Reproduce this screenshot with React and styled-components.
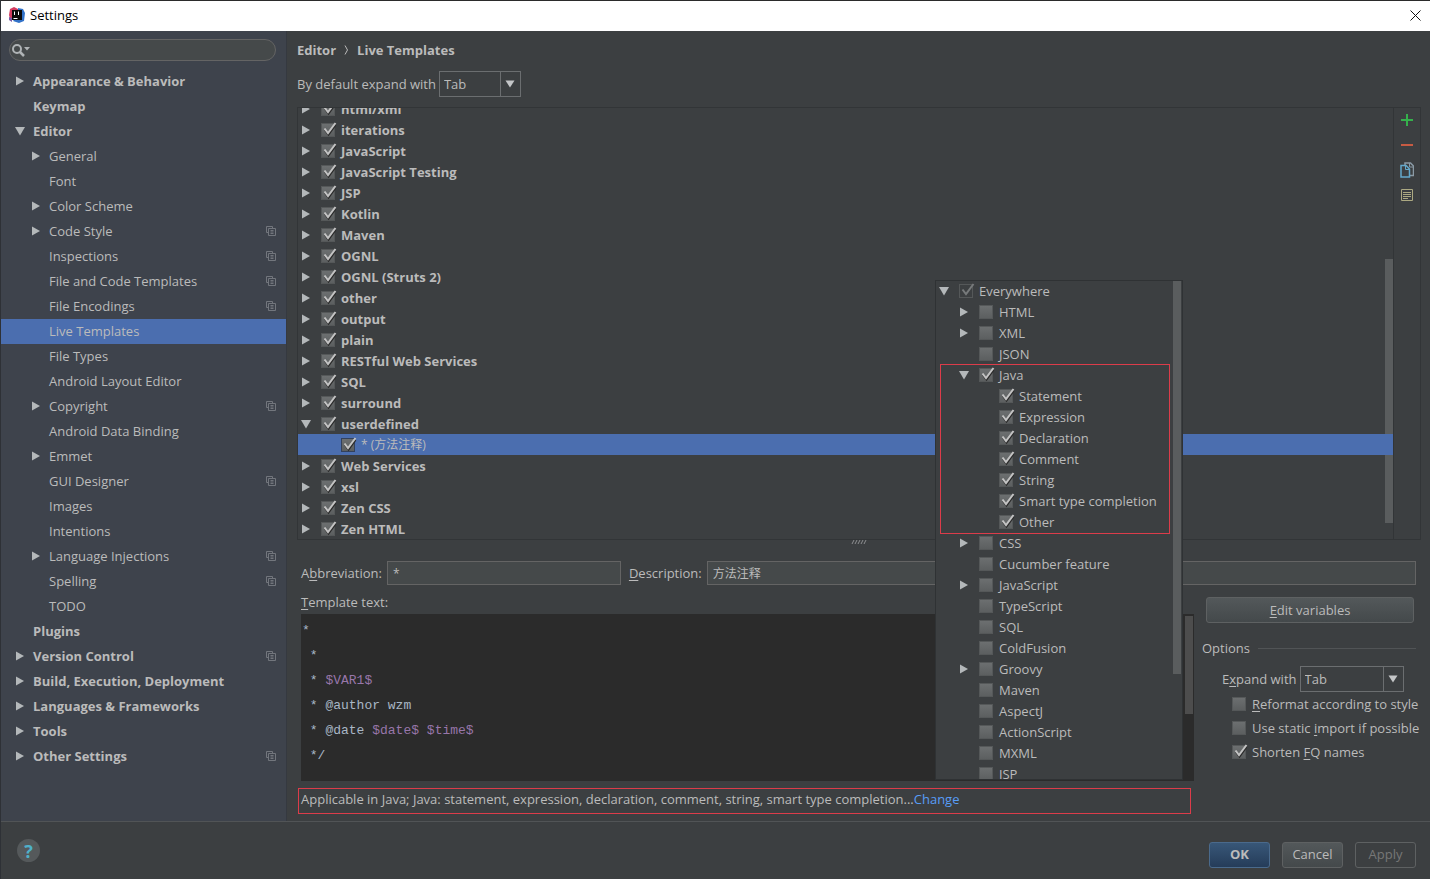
import React from 'react';
import styled, { createGlobalStyle, css } from 'styled-components';

const sidebarItems = [
  { label: 'Appearance & Behavior', arrow: 'right', top: true },
  { label: 'Keymap', top: true },
  { label: 'Editor', arrow: 'down', top: true },
  { label: 'General', arrow: 'right' },
  { label: 'Font' },
  { label: 'Color Scheme', arrow: 'right' },
  { label: 'Code Style', arrow: 'right', project: true },
  { label: 'Inspections', project: true },
  { label: 'File and Code Templates', project: true },
  { label: 'File Encodings', project: true },
  { label: 'Live Templates', selected: true },
  { label: 'File Types' },
  { label: 'Android Layout Editor' },
  { label: 'Copyright', arrow: 'right', project: true },
  { label: 'Android Data Binding' },
  { label: 'Emmet', arrow: 'right' },
  { label: 'GUI Designer', project: true },
  { label: 'Images' },
  { label: 'Intentions' },
  { label: 'Language Injections', arrow: 'right', project: true },
  { label: 'Spelling', project: true },
  { label: 'TODO' },
  { label: 'Plugins', top: true },
  { label: 'Version Control', arrow: 'right', top: true, project: true },
  { label: 'Build, Execution, Deployment', arrow: 'right', top: true },
  { label: 'Languages & Frameworks', arrow: 'right', top: true },
  { label: 'Tools', arrow: 'right', top: true },
  { label: 'Other Settings', arrow: 'right', top: true, project: true },
];

const group = (label) => ({ label, arrow: 'right', checked: true, bold: true });

const templates = [
  ...[
    'html/xml',
    'iterations',
    'JavaScript',
    'JavaScript Testing',
    'JSP',
    'Kotlin',
    'Maven',
    'OGNL',
    'OGNL (Struts 2)',
    'other',
    'output',
    'plain',
    'RESTful Web Services',
    'SQL',
    'surround',
  ].map(group),
  { label: 'userdefined', arrow: 'down', checked: true, bold: true },
  { label: '* (方法注释)', level: 1, checked: true, selected: true },
  ...['Web Services', 'xsl', 'Zen CSS', 'Zen HTML'].map(group),
];

const contextsBefore = [
  { label: 'Everywhere', arrow: 'down', checked: true, muted: true },
  { label: 'HTML', arrow: 'right', level: 1 },
  { label: 'XML', arrow: 'right', level: 1 },
  { label: 'JSON', level: 1 },
];

const contextsJava = [
  { label: 'Java', arrow: 'down', level: 1, checked: true },
  ...[
    'Statement',
    'Expression',
    'Declaration',
    'Comment',
    'String',
    'Smart type completion',
    'Other',
  ].map((label) => ({ label, level: 2, checked: true })),
];

const contextsAfter = [
  { label: 'CSS', arrow: 'right', level: 1 },
  { label: 'Cucumber feature', level: 1 },
  { label: 'JavaScript', arrow: 'right', level: 1 },
  { label: 'TypeScript', level: 1 },
  { label: 'SQL', level: 1 },
  { label: 'ColdFusion', level: 1 },
  { label: 'Groovy', arrow: 'right', level: 1 },
  { label: 'Maven', level: 1 },
  { label: 'AspectJ', level: 1 },
  { label: 'ActionScript', level: 1 },
  { label: 'MXML', level: 1 },
  { label: 'JSP', level: 1 },
];

const Arrow = ({ dir }) => (
  <ArrowBox>
    {dir && (
      <svg width="10" height="10" viewBox="0 0 10 10" aria-hidden="true">
        <path d={dir === 'down' ? 'M0 1h10L5 9.5z' : 'M1 0.5v9l8-4.5z'} fill="#b4b8ba" />
      </svg>
    )}
  </ArrowBox>
);

const Check = ({ checked, muted, selected, ...rest }) => (
  <CheckBox>
    <CheckInput
      type="checkbox"
      defaultChecked={checked}
      $muted={muted}
      $selected={selected}
      {...rest}
    />
    {checked && (
      <svg width="16" height="16" viewBox="0 0 16 16" fill="none" aria-hidden="true">
        {!muted && <path d="M4 8l3.5 4.5L14.5 3" stroke="#2b2b2b" strokeWidth="2" />}
        <path d="M3.5 6.5l3.5 4.5L14.5 1" stroke={muted ? '#777a7b' : '#c3c3c3'} strokeWidth="2" />
      </svg>
    )}
  </CheckBox>
);

const CheckRow = ({ item }) => (
  <Row $level={item.level || 0} $selected={item.selected} $bold={item.bold}>
    <Arrow dir={item.arrow} />
    <RowLabel>
      <Check checked={item.checked} muted={item.muted} selected={item.selected} />
      {item.label}
    </RowLabel>
  </Row>
);

const Combo = ({ id, wide }) => (
  <ComboBox $wide={wide}>
    <select id={id} defaultValue="Tab">
      <option>Tab</option>
      <option>Enter</option>
      <option>Space</option>
    </select>
    <ComboArrow>
      <svg width="10" height="8" viewBox="0 0 10 8" aria-hidden="true">
        <path d="M0.5 0.5h9L5 7.5z" fill="#c4c6c8" />
      </svg>
    </ComboArrow>
  </ComboBox>
);

const ProjectIcon = () => (
  <svg width="10" height="10" viewBox="0 0 10 10" fill="none" stroke="#72767d" aria-hidden="true">
    <path d="M2.5 6.5h-2v-6h6v2" />
    <path d="M2.5 2.5h7v7h-7zM4.5 4.5h3M4.5 6h3M4.5 7.5h3" />
  </svg>
);

const LogoIcon = () => (
  <svg width="16" height="16" viewBox="0 0 16 16" aria-hidden="true">
    <path d="M1 2l4-2 6 3-3 10-7-1-1-4z" fill="#d43b5f" />
    <path d="M9 1l5 1 2 4-1 8-5 2-6-2 5-6z" fill="#3272c8" />
    <path d="M0 10l3 1v4l-3-2z" fill="#7a5aa8" />
    <rect x="3" y="3" width="10" height="10" fill="#0b0b0b" />
    <path d="M5.5 4.5v3.5M9.5 4.5v3.5" stroke="#fff" fill="none" />
    <path d="M4.5 11.5h4" stroke="#fff" />
  </svg>
);

const App = () => (
  <Window>
    <GlobalStyle />
    <TitleBar>
      <LogoIcon />
      <WindowTitle>Settings</WindowTitle>
      <CloseButton aria-label="Close">
        <svg width="11" height="11" viewBox="0 0 11 11" stroke="#111" aria-hidden="true">
          <path d="M0.5 0.5l10 10M10.5 0.5l-10 10" />
        </svg>
      </CloseButton>
    </TitleBar>

    <Body>
      <Sidebar>
        <SearchField>
          <svg width="20" height="14" viewBox="0 0 20 14" fill="none" aria-hidden="true">
            <circle cx="6" cy="6" r="4" stroke="#b0b4b6" strokeWidth="2" />
            <path d="M9 9l4 4" stroke="#b0b4b6" strokeWidth="2.5" />
            <path d="M13 4h6l-3 3.5z" fill="#b0b4b6" />
          </svg>
          <input type="text" aria-label="Search settings" />
        </SearchField>
        <nav>
          {sidebarItems.map((item) => (
            <SidebarItem
              key={item.label}
              href="#"
              $top={item.top}
              $selected={item.selected}
            >
              <Arrow dir={item.arrow} />
              <SidebarLabel>{item.label}</SidebarLabel>
              {item.project && <ProjectIcon />}
            </SidebarItem>
          ))}
        </nav>
      </Sidebar>

      <Main>
        <Breadcrumb>
          <span>Editor</span>
          <svg width="5" height="10" viewBox="0 0 5 10" fill="none" stroke="#bbb" aria-hidden="true">
            <path d="M1 0.5l2.5 4.5L1 9.5" />
          </svg>
          <span>Live Templates</span>
        </Breadcrumb>
        <DefaultExpand>
          <label htmlFor="default-expand">By default expand with</label>
          <Combo id="default-expand" />
        </DefaultExpand>

        <TemplatesPanel>
          <TemplatesList>
            {templates.map((item) => (
              <CheckRow key={item.label} item={item} />
            ))}
            <ListThumb />
          </TemplatesList>
          <Toolbar>
            <ToolButton aria-label="Add">
              <svg width="12" height="12" viewBox="0 0 12 12" aria-hidden="true">
                <path d="M6 0v12M0 6h12" stroke="#35b14c" strokeWidth="2" />
              </svg>
            </ToolButton>
            <ToolButton aria-label="Remove">
              <svg width="12" height="12" viewBox="0 0 12 12" aria-hidden="true">
                <path d="M0 6h12" stroke="#c75b43" strokeWidth="2" />
              </svg>
            </ToolButton>
            <ToolButton aria-label="Duplicate">
              <svg width="14" height="16" viewBox="0 0 14 16" fill="none" aria-hidden="true">
                <path d="M5 3V1h5.5l3 3v9.5H10" stroke="#8a9aa5" strokeWidth="1.5" />
                <path d="M9.5 1v4h4" stroke="#8a9aa5" />
                <path d="M1 3.5h5l3.5 3.5v8H1z" stroke="#64a9cc" strokeWidth="1.5" />
                <path d="M5.5 4v3.5h4" stroke="#64a9cc" />
              </svg>
            </ToolButton>
            <ToolButton aria-label="Restore defaults">
              <svg width="12" height="12" viewBox="0 0 12 12" fill="none" stroke="#aca982" aria-hidden="true">
                <path d="M0.5 0.5h11v11h-11zM2 3.5h8M2 5.5h8M2 7.5h8M2 9.5h5" />
              </svg>
            </ToolButton>
          </Toolbar>
        </TemplatesPanel>

        <Splitter>
          <svg width="16" height="4" viewBox="0 0 16 4" stroke="#8c8f90" aria-hidden="true">
            <path d="M1 4l2-4M4 4l2-4M7 4l2-4M10 4l2-4M13 4l2-4" />
          </svg>
        </Splitter>

        <Details>
          <FieldsRow>
            <label htmlFor="abbreviation">
              A<u>b</u>breviation:
            </label>
            <TextField id="abbreviation" type="text" defaultValue="*" $fixed />
            <label htmlFor="description">
              <u>D</u>escription:
            </label>
            <TextField id="description" type="text" defaultValue="方法注释" />
          </FieldsRow>

          <Columns>
            <EditorColumn>
              <EditorLabel id="template-text">
                <u>T</u>emplate text:
              </EditorLabel>
              <EditorFrame>
                <Code
                  contentEditable
                  suppressContentEditableWarning
                  spellCheck={false}
                  role="textbox"
                  aria-multiline="true"
                  aria-labelledby="template-text"
                >
                  <div>*</div>
                  <div>{' *'}</div>
                  <div>
                    {' * '}
                    <Variable>$VAR1$</Variable>
                  </div>
                  <div>{' * @author wzm'}</div>
                  <div>
                    {' * @date '}
                    <Variable>$date$ $time$</Variable>
                  </div>
                  <div>{' */'}</div>
                </Code>
                <EditorThumb />
              </EditorFrame>
            </EditorColumn>

            <OptionsColumn>
              <Button>
                <u>E</u>dit variables
              </Button>
              <Options>
                <legend>Options</legend>
                <ExpandWith>
                  <label htmlFor="expand-with">
                    E<u>x</u>pand with
                  </label>
                  <Combo id="expand-with" wide />
                </ExpandWith>
                <OptionLabel>
                  <Check />
                  <span>
                    <u>R</u>eformat according to style
                  </span>
                </OptionLabel>
                <OptionLabel>
                  <Check />
                  <span>
                    Use static <u>i</u>mport if possible
                  </span>
                </OptionLabel>
                <OptionLabel>
                  <Check checked />
                  <span>
                    Shorten <u>F</u>Q names
                  </span>
                </OptionLabel>
              </Options>
            </OptionsColumn>
          </Columns>
        </Details>

        <Applicable>
          <span>
            Applicable in Java; Java: statement, expression, declaration, comment, string, smart
            type completion...
          </span>
          <a href="#">Change</a>
          <ContextPopup>
            <ContextTree>
              {contextsBefore.map((item) => (
                <CheckRow key={item.label} item={item} />
              ))}
              <Highlighted>
                {contextsJava.map((item) => (
                  <CheckRow key={item.label} item={item} />
                ))}
              </Highlighted>
              {contextsAfter.map((item) => (
                <CheckRow key={item.label} item={item} />
              ))}
            </ContextTree>
            <PopupThumb />
          </ContextPopup>
        </Applicable>
      </Main>
    </Body>

    <Footer>
      <HelpButton aria-label="Help">?</HelpButton>
      <Button $primary>OK</Button>
      <Button>Cancel</Button>
      <Button disabled>Apply</Button>
    </Footer>
  </Window>
);

const GlobalStyle = createGlobalStyle`
  * {
    box-sizing: border-box;
  }

  body {
    margin: 0;
    background: #3c3f41;
    color: #bbbbbb;
    font-family: 'Open Sans', 'Noto Sans CJK SC', sans-serif;
    font-size: 13px;
    line-height: 20px;
  }

  button,
  input,
  select {
    margin: 0;
    color: inherit;
    font: inherit;
  }

  svg {
    flex: none;
    display: block;
  }

  u {
    text-underline-offset: 2px;
  }
`;

const Window = styled.div`
  display: flex;
  flex-direction: column;
  height: 100vh;
  min-height: 860px;
  border-left: 1px solid #2e3136;
`;

const TitleBar = styled.header`
  display: flex;
  flex: none;
  align-items: center;
  gap: 5px;
  height: 31px;
  padding: 0 9px 2px 8px;
  border-top: 1px solid #2b2b2b;
  background: white;
  color: black;
`;

const WindowTitle = styled.span`
  flex: 1;
`;

const CloseButton = styled.button`
  padding: 0;
  border: 0;
  background: none;
`;

const Body = styled.div`
  display: flex;
  flex: 1;
  min-height: 0;
`;

const Sidebar = styled.aside`
  flex: none;
  width: 286px;
  padding-top: 8px;
  border-right: 1px solid #353940;
  background: #3e434c;
`;

const SearchField = styled.div`
  display: flex;
  align-items: center;
  height: 22px;
  margin: 0 10px 8px 8px;
  padding: 0 10px 0 1px;
  border: 1px solid #646464;
  border-radius: 11px;
  background: #45494a;

  input {
    flex: 1;
    min-width: 0;
    padding: 0 4px;
    border: 0;
    outline: 0;
    background: none;
  }
`;

const SidebarItem = styled.a`
  display: flex;
  align-items: center;
  gap: 8px;
  height: 25px;
  padding: 0 10px 2px ${({ $top }) => ($top ? 14 : 30)}px;
  background: ${({ $selected }) => ($selected ? '#4b6eaf' : 'none')};
  color: inherit;
  font-weight: ${({ $top }) => ($top ? 700 : 400)};
  text-decoration: none;
`;

const SidebarLabel = styled.span`
  flex: 1;
`;

const ArrowBox = styled.span`
  flex: none;
  width: 10px;
`;

const Main = styled.main`
  display: flex;
  flex: 1;
  flex-direction: column;
  min-width: 0;
  padding: 9px 9px 7px 10px;
`;

const Breadcrumb = styled.div`
  display: flex;
  align-items: center;
  gap: 8px;
  margin-bottom: 11px;
  font-weight: 700;
`;

const DefaultExpand = styled.div`
  display: flex;
  align-items: center;
  gap: 3px;
  margin-bottom: 10px;
`;

const ComboBox = styled.div`
  display: flex;
  width: ${({ $wide }) => ($wide ? 104 : 82)}px;
  height: 26px;
  border: 1px solid #6b6e70;

  select {
    flex: 1;
    min-width: 0;
    padding: 0 4px;
    border: 0;
    outline: 0;
    appearance: none;
    background: none;
  }
`;

const ComboArrow = styled.span`
  display: flex;
  align-items: center;
  justify-content: center;
  width: 20px;
  border-left: 1px solid #6b6e70;
`;

const TemplatesPanel = styled.section`
  display: flex;
  flex: 1;
  min-height: 0;
  border: 1px solid #323537;
  border-bottom: 0;
`;

/* rows hang from the bottom edge, so the first one is cut as in a scrolled list */
const TemplatesList = styled.div`
  position: relative;
  display: flex;
  flex: 1;
  flex-direction: column;
  justify-content: flex-end;
  overflow: hidden;
  isolation: isolate;
`;

const Thumb = styled.div`
  position: absolute;
  width: 8px;
  background: #5a5d5e;
`;

const ListThumb = styled(Thumb)`
  top: 35%;
  right: 0;
  bottom: 16px;
`;

const Row = styled.div`
  display: flex;
  flex: none;
  align-items: center;
  gap: 10px;
  height: 21px;
  padding-left: ${({ $level }) => 3 + $level * 20}px;
  font-weight: ${({ $bold }) => ($bold ? 700 : 400)};
  white-space: nowrap;
  ${({ $selected }) =>
    $selected &&
    css`
      position: relative;
      z-index: 1;
      background: #4b6eaf;
      font-size: 12px;
    `}
`;

const RowLabel = styled.label`
  display: flex;
  align-items: center;
  gap: 5px;
`;

const CheckBox = styled.span`
  display: grid;
  flex: none;
  width: 15px;
  height: 16px;

  > * {
    grid-area: 1 / 1;
  }

  svg {
    pointer-events: none;
  }
`;

const CheckInput = styled.input`
  align-self: center;
  width: 14px;
  height: 14px;
  appearance: none;
  border: 1px solid ${({ $selected }) => ($selected ? '#33415c' : '#555859')};
  background: ${({ $muted }) => ($muted ? 'none' : 'linear-gradient(#6c6f70, #5c5f60)')};
`;

const Toolbar = styled.div`
  display: flex;
  flex: none;
  flex-direction: column;
  align-items: center;
  width: 27px;
  border-left: 1px solid #323537;
`;

const ToolButton = styled.button`
  display: flex;
  align-items: center;
  justify-content: center;
  width: 26px;
  height: 25px;
  padding: 0 0 2px;
  border: 0;
  background: none;
`;

const Splitter = styled.div`
  display: flex;
  flex: none;
  justify-content: center;
  height: 22px;
  border-top: 1px solid #323537;
`;

const Details = styled.section`
  padding: 0 5px 0 4px;
`;

const FieldsRow = styled.div`
  display: flex;
  align-items: center;
  gap: 5px;
`;

const TextField = styled.input`
  flex: ${({ $fixed }) => ($fixed ? 'none' : '1')};
  width: ${({ $fixed }) => ($fixed ? '234px' : 'auto')};
  min-width: 0;
  height: 24px;
  padding: 0 5px;
  border: 1px solid #646464;
  outline: 0;
  background: #45494a;
  font-size: 12px;

  & + label {
    margin-left: 3px;
  }
`;

const Columns = styled.div`
  display: flex;
  gap: 8px;
  padding-top: 7px;
`;

const EditorColumn = styled.div`
  flex: 1;
  min-width: 0;
`;

const EditorLabel = styled.div`
  margin-bottom: 2px;
`;

const EditorFrame = styled.div`
  position: relative;
  height: 167px;
  background: #2b2b2b;
`;

const Code = styled.div`
  padding: 4px 1px;
  outline: 0;
  color: #a9b7c6;
  font-family: 'Liberation Mono', monospace;
  font-size: 13px;
  line-height: 25px;
  white-space: pre;
`;

const Variable = styled.span`
  color: #9876aa;
`;

const EditorThumb = styled(Thumb)`
  top: 2px;
  right: 1px;
  height: 98px;
  background: #4d4d4d;
`;

const OptionsColumn = styled.div`
  display: flex;
  flex: none;
  flex-direction: column;
  width: 214px;
  padding-top: 5px;

  > button {
    margin: 0 2px 0 4px;
  }
`;

const Button = styled.button`
  height: 26px;
  padding: 0 10px 1px;
  border: 1px solid #5e6162;
  border-radius: 3px;
  background: linear-gradient(#53585a, #44494b);

  ${({ $primary }) =>
    $primary &&
    css`
      border-color: #4a6a8c;
      background: linear-gradient(#385778, #253c59);
      font-weight: 700;
    `}

  &:disabled {
    background: none;
    color: #777777;
  }
`;

const Options = styled.fieldset`
  min-width: 0;
  margin: 15px 0 0;
  padding: 8px 0 0;
  border: 0;
  border-top: 1px solid #515456;

  legend {
    padding: 0 8px 0 0;
  }
`;

const ExpandWith = styled.div`
  display: flex;
  align-items: center;
  gap: 3px;
  padding-left: 20px;
`;

const OptionLabel = styled.label`
  display: flex;
  align-items: center;
  gap: 5px;
  height: 24px;
  padding-left: 30px;
  white-space: nowrap;
`;

const Applicable = styled.div`
  position: relative;
  display: flex;
  flex: none;
  align-items: center;
  height: 26px;
  margin: 7px 230px 0 1px;
  padding: 0 2px 4px;
  border: 1px solid #dc3c4a;
  white-space: nowrap;

  a {
    color: #589df6;
    text-decoration: none;
  }
`;

const ContextPopup = styled.div`
  position: absolute;
  right: 7px;
  bottom: 33px;
  width: 248px;
  height: 500px;
  overflow: hidden;
  border: 1px solid #2f3234;
  background: #3c3f41;
`;

const ContextTree = styled.div`
  padding-right: 13px;

  ${Row} {
    padding-bottom: 2px;
  }
`;

const Highlighted = styled.div`
  margin-left: 5px;
  outline: 1px solid #dc3c4a;

  ${Row} {
    margin-left: -5px;
  }
`;

const PopupThumb = styled(Thumb)`
  top: 0;
  right: 1px;
  height: 393px;
`;

const Footer = styled.footer`
  display: flex;
  flex: none;
  align-items: center;
  gap: 12px;
  height: 58px;
  padding: 8px 14px 0 16px;
  border-top: 1px solid #515456;

  ${Button} {
    width: 61px;
    padding: 0 0 1px;
  }
`;

const HelpButton = styled.button`
  width: 23px;
  height: 23px;
  margin: 0 auto 8px 0;
  padding: 0;
  border: 0;
  border-radius: 50%;
  background: #55595b;
  color: #4fb0c9;
  font-size: 18px;
  font-weight: 700;
`;

export default App;
